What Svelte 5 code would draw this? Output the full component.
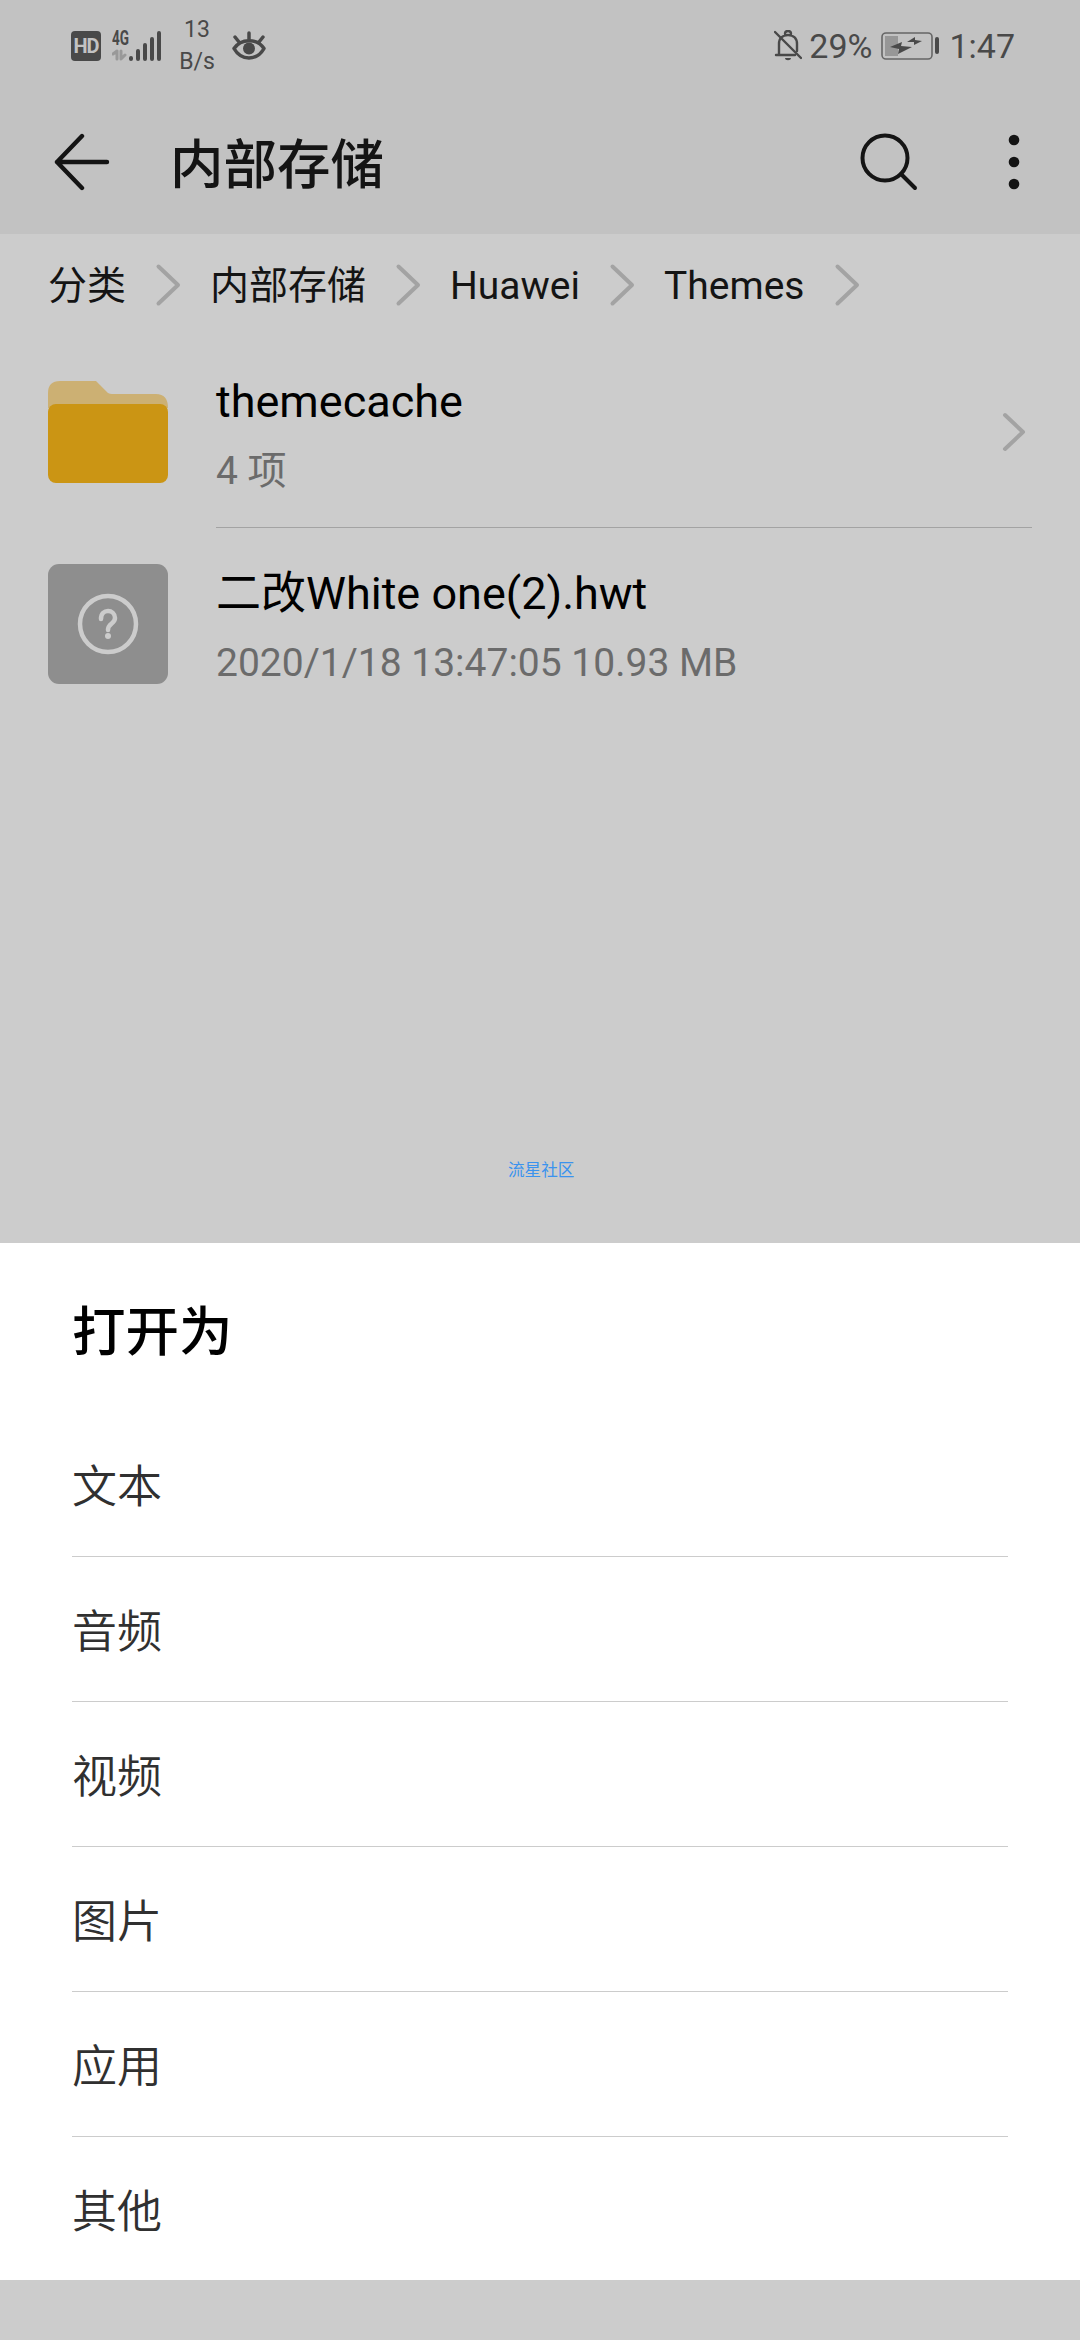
<script lang="ts">
  interface FileEntry {
    name: string;
    detail: string;
    folder: boolean;
  }

  const crumbs = ['分类', '内部存储', 'Huawei', 'Themes'];

  const files: FileEntry[] = [
    { name: 'themecache', detail: '4 项', folder: true },
    { name: '二改White one(2).hwt', detail: '2020/1/18 13:47:05 10.93 MB', folder: false },
  ];

  const openAs = ['文本', '音频', '视频', '图片', '应用', '其他'];
</script>

<div class="screen">
  <header>
    <div class="status-bar">
      <span class="hd">HD</span>
      <svg class="signal" width="50" height="46" viewBox="0 0 50 46">
        <text x="0" y="21.500" textLength="17" lengthAdjust="spacingAndGlyphs">4G</text>
        <path class="data" d="M1 31l4-3v8M9 28v8l4-4" />
        <path class="bars" d="M19 35v1M26 28v8M33 22v14M40 16v20M47 10v26" />
      </svg>
      <span class="speed">13<br />B/s</span>
      <svg class="eye" width="34" height="32" viewBox="0 0 34 32">
        <path d="M2 18.500C9 8 25 8 32 18.500C25 31 9 31 2 18.500z" />
        <path d="M17 3v6M3 7l4 5M31 7l-4 5" />
        <circle cx="17" cy="18.500" r="6" />
      </svg>
      <span class="spacer"></span>
      <svg class="bell" width="28" height="32" viewBox="0 0 28 32">
        <path d="M5 24V14C5 8 9 5 14 5s9 3 9 9v7M2 25h19M11 4c0-4 6-4 6 0" />
        <path d="M1 2l26 26" />
        <path class="clapper" d="M11 28h6c0 3-6 3-6 0z" />
      </svg>
      <span class="percent">29%</span>
      <svg class="battery" width="58" height="28" viewBox="0 0 58 28">
        <rect class="level" x="4" y="4" width="13" height="20" />
        <rect class="case" x="1" y="1" width="50" height="26" rx="4" />
        <rect class="tip" x="54" y="5" width="4" height="17" rx="2" />
        <path class="bolt" d="M9 15l12-5-1 4 11 1-14 7 1-5zM26 10l8-5v3l7 1-8 4v-3z" />
      </svg>
      <span class="clock">1:47</span>
    </div>
    <div class="app-bar">
      <svg class="back" width="58" height="58" viewBox="0 0 58 58">
        <path d="M29 3L4 29l25 26M4 29h50" />
      </svg>
      <h1>内部存储</h1>
      <svg class="search" width="58" height="60" viewBox="0 0 58 60">
        <circle cx="25" cy="26" r="22.500" />
        <path d="M41 42l14 14" />
      </svg>
      <svg class="more" width="12" height="56" viewBox="0 0 12 56">
        <circle cx="6" cy="6" r="5.300" />
        <circle cx="6" cy="28" r="5.300" />
        <circle cx="6" cy="50" r="5.300" />
      </svg>
    </div>
  </header>

  <nav>
    {#each crumbs as crumb}
      <span>{crumb}</span>
      <svg class="chevron" width="84" height="44" viewBox="0 0 84 44">
        <path d="M32.500 3.500L52 22L32.500 40.500" />
      </svg>
    {/each}
  </nav>

  <main>
    {#each files as file}
      <div class="file">
        {#if file.folder}
          <svg class="icon" width="120" height="120" viewBox="0 0 120 120">
            <path d="M0 36V21Q0 9 12 9H48L60 21Q62 22 64 22H108Q120 22 120 36z" fill="#ccb073" />
            <rect y="32" width="120" height="79" rx="8" fill="#cb9514" />
          </svg>
        {:else}
          <svg class="icon" width="120" height="120" viewBox="0 0 120 120">
            <rect width="120" height="120" rx="11" fill="#8e8e8e" />
            <circle class="mark" cx="60" cy="60" r="28" />
            <path class="mark" d="M53 55C53 44 67 45 67 54C67 60 60 59 60 66" />
            <circle cx="60" cy="72" r="3" fill="#ccc" />
          </svg>
        {/if}
        <div class="info">
          <div class="name">{file.name}</div>
          <div class="detail">{file.detail}</div>
        </div>
        {#if file.folder}
          <svg class="chevron" width="28" height="40" viewBox="0 0 28 40">
            <path d="M4 3L22 20L4 37" />
          </svg>
        {/if}
      </div>
    {/each}
  </main>

  <div class="watermark">流星社区</div>

  <section class="sheet">
    <h2>打开为</h2>
    <ul>
      {#each openAs as option}
        <li>{option}</li>
      {/each}
    </ul>
  </section>
</div>

<style>
  :global(body) {
    background: #ccc;
  }

  .screen {
    height: 2340px;
    display: flex;
    flex-direction: column;
    background: #ccc;
    color: #141414;
    font-family: Roboto, 'Noto Sans CJK SC', sans-serif;
    overflow: hidden;
  }

  svg {
    display: block;
    flex: none;
    fill: none;
    stroke-linecap: round;
    stroke-linejoin: round;
  }

  header {
    height: 234px;
    background: #c2c2c2;
  }

  .status-bar {
    height: 90px;
    display: flex;
    align-items: center;
    padding: 2px 65px 0 71px;
    box-sizing: border-box;
    color: #494949;
    font-size: 34px;
    line-height: 40px;
  }

  .hd {
    width: 30px;
    height: 30px;
    border-radius: 4px;
    background: #494949;
    color: #c2c2c2;
    font-size: 20px;
    font-weight: 700;
    line-height: 31px;
    text-align: center;
    letter-spacing: -1px;
  }

  .signal {
    margin-left: 11px;
  }

  .signal text {
    font-size: 20px;
    font-weight: 700;
    fill: #494949;
  }

  .signal .data {
    stroke: #999;
    stroke-width: 3;
  }

  .signal .bars {
    stroke: #494949;
    stroke-width: 4;
  }

  .speed {
    width: 40px;
    margin-left: 15px;
    font-size: 23px;
    line-height: 32px;
    text-align: center;
  }

  .eye {
    margin-left: 15px;
    stroke: #494949;
    stroke-width: 3.5;
  }

  .eye circle {
    fill: #494949;
    stroke: none;
  }

  .spacer {
    flex: 1;
  }

  .bell {
    stroke: #494949;
    stroke-width: 2.4;
  }

  .bell .clapper {
    fill: #494949;
    stroke: none;
  }

  .percent {
    margin-left: 7px;
  }

  .battery {
    margin: 0 10px 0 9px;
  }

  .battery .level {
    fill: #979797;
  }

  .battery .case {
    stroke: #666;
    stroke-width: 1.6;
  }

  .battery .tip,
  .battery .bolt {
    fill: #494949;
  }

  .app-bar {
    height: 144px;
    display: flex;
    align-items: center;
    padding: 0 60px 0 53px;
  }

  .back,
  .search {
    stroke: #141414;
    stroke-width: 4.4;
  }

  .search {
    stroke-width: 4;
  }

  .more {
    margin-left: 90px;
    fill: #141414;
  }

  h1,
  h2 {
    margin: 0;
    font-size: 53.5px;
    font-weight: 450;
    line-height: 72px;
  }

  h1 {
    flex: 1;
    margin-left: 59px;
    padding-top: 7px;
  }

  nav {
    height: 102px;
    display: flex;
    align-items: center;
    padding-left: 48px;
    font-size: 39px;
    line-height: 54px;
  }

  nav span {
    padding-top: 2px;
  }

  .chevron {
    stroke: #a3a3a3;
    stroke-width: 4;
  }

  .file {
    height: 192px;
    display: flex;
    align-items: center;
    padding: 0 48px;
  }

  .info {
    flex: 1;
    height: 191px;
    margin-left: 48px;
    padding-top: 35px;
    box-sizing: border-box;
  }

  .name {
    color: #000;
    font-size: 45px;
    line-height: 60px;
  }

  .detail {
    margin-top: 13px;
    color: #6b6b6b;
    font-size: 39px;
    line-height: 52px;
  }

  .file .chevron {
    margin-right: 3px;
  }

  .file:first-child {
    background: linear-gradient(#a3a3a3, #a3a3a3) no-repeat 216px 191px / 816px 1px;
  }

  .icon .mark {
    stroke: #ccc;
    stroke-width: 4.5;
  }

  .watermark {
    margin-top: auto;
    padding: 0 0 60px 508px;
    color: #3b93ee;
    font-size: 16.6px;
    line-height: 24px;
  }

  .sheet {
    height: 1037px;
    flex: none;
    margin-bottom: 60px;
    padding: 54px 72px 0;
    box-sizing: border-box;
    background: #fff;
  }

  h2 {
    color: #000;
  }

  ul {
    margin: 43px 0 0;
    padding: 0;
    list-style: none;
  }

  li {
    height: 145px;
    box-sizing: border-box;
    border-bottom: 1px solid #ccc;
    color: #303030;
    font-size: 45px;
    font-weight: 350;
    line-height: 151px;
  }

  li:last-child {
    border-bottom: 0;
  }
</style>
